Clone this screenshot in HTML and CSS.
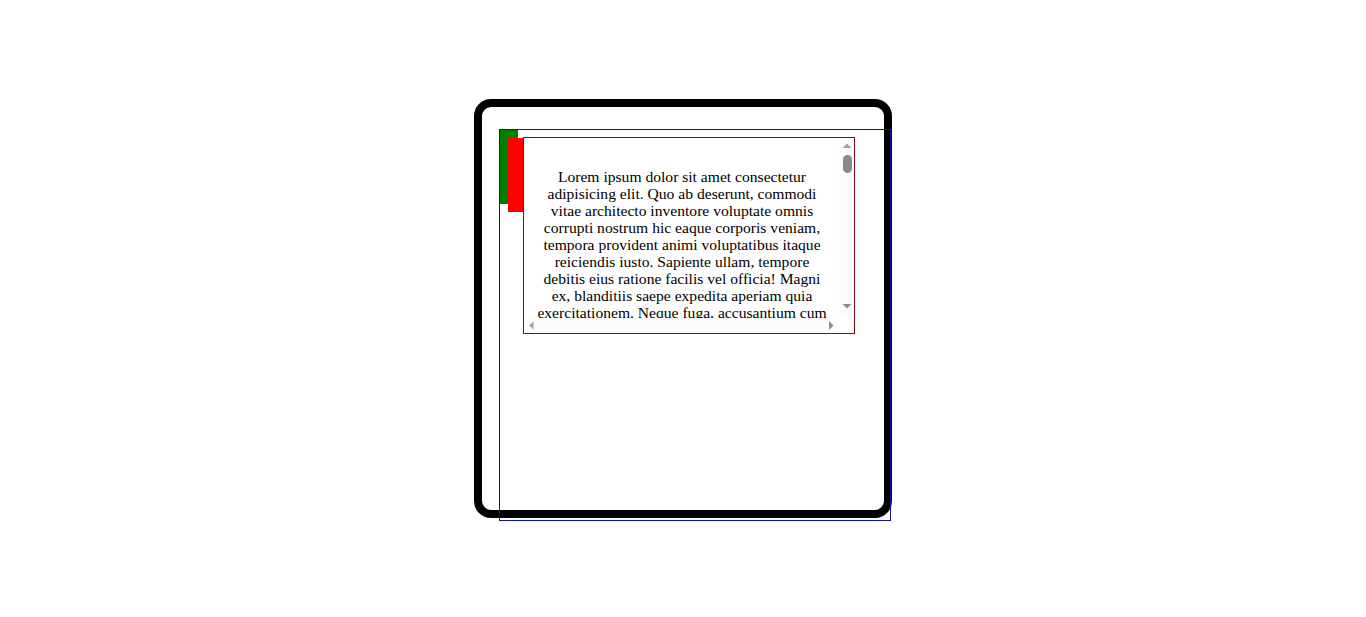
FILE: index.html
```html
<!DOCTYPE html>
<html lang="en">
<head>
<meta charset="utf-8">
<title>Box</title>
<link rel="stylesheet" href="styles.css">
</head>
<body>
  <div class="frame">
    <div class="canvas">
      <div class="green"></div>
      <div class="row">
        <div class="red"></div>
        <div class="box">
          <div class="viewport">
            <p class="text">Lorem ipsum dolor sit amet consectetur adipisicing elit. Quo ab deserunt, commodi vitae architecto inventore voluptate omnis corrupti nostrum hic eaque corporis veniam, tempora provident animi voluptatibus itaque reiciendis iusto. Sapiente ullam, tempore debitis eius ratione facilis vel officia! Magni ex, blanditiis saepe expedita aperiam quia exercitationem. Neque fuga, accusantium cum quos nisi laboriosam eligendi repellendus, dolorum odit nam sequi minus.</p>
          </div>
          <div class="vbar">
            <svg class="arrow" width="15" height="15" viewBox="0 0 15 15"><path d="M3.5 10 L8 5.5 L12.5 10Z" fill="#a3a3a3"/></svg>
            <div class="vthumb"></div>
            <svg class="arrow arrow-end" width="15" height="15" viewBox="0 0 15 15"><path d="M3.5 3 L8 7.5 L12.5 3Z" fill="#8e8e8e"/></svg>
          </div>
          <div class="hbar">
            <svg class="arrow" width="15" height="15" viewBox="0 0 15 15"><path d="M9.5 3.5 L5 7.5 L9.5 11.5Z" fill="#a3a3a3"/></svg>
            <svg class="arrow" width="15" height="15" viewBox="0 0 15 15"><path d="M5 3 L9.5 7.5 L5 12Z" fill="#8e8e8e"/></svg>
          </div>
          <div class="corner"></div>
        </div>
      </div>
    </div>
  </div>
</body>
</html>
```
FILE: styles.css
```css
html, body {
  margin: 0;
  padding: 0;
  background: #ffffff;
}

body {
  min-height: 100vh;
  padding-top: 99px;
  box-sizing: border-box;
}

.frame {
  box-sizing: border-box;
  width: 418px;
  height: 419px;
  margin: 0 auto;
  border: 8px solid #000000;
  border-radius: 17px;
  padding: 22px 0 0 17px;
}

.canvas {
  position: relative;
  width: 390px;
  height: 390px;
  border: 1px solid #10109c;
}

.green {
  position: absolute;
  left: 0;
  top: 0;
  width: 18px;
  height: 74px;
  background: #008000;
}

.row {
  position: relative;
  display: flex;
  align-items: flex-start;
  padding: 7px 0 0 8px;
}

.red {
  width: 15px;
  height: 74px;
  margin-top: 1px;
  background: #ff0000;
}

.box {
  box-sizing: border-box;
  width: 332px;
  height: 197px;
  border: 1px solid #7f0f0f;
  background: #ffffff;
  display: grid;
  grid-template-columns: 1fr 15px;
  grid-template-rows: 1fr 15px;
}

.viewport {
  overflow: hidden;
  min-width: 0;
  min-height: 0;
}

.text {
  margin: 0;
  padding: 30px 12px 0 13px;
  font-family: "Liberation Serif", "Times New Roman", serif;
  font-size: 15.6px;
  line-height: 17px;
  color: #000000;
  text-align: center;
}

.vbar {
  display: flex;
  flex-direction: column;
  background: #fcfcfc;
}

.arrow {
  display: block;
  flex: none;
}

.arrow-end {
  margin-top: auto;
  margin-bottom: 2px;
}

.vthumb {
  width: 9px;
  height: 18px;
  margin: 2px 0 0 4px;
  border-radius: 5px;
  background: #8a8a8a;
}

.hbar {
  display: flex;
  justify-content: space-between;
  background: #fcfcfc;
}

.corner {
  background: #ffffff;
}
```
